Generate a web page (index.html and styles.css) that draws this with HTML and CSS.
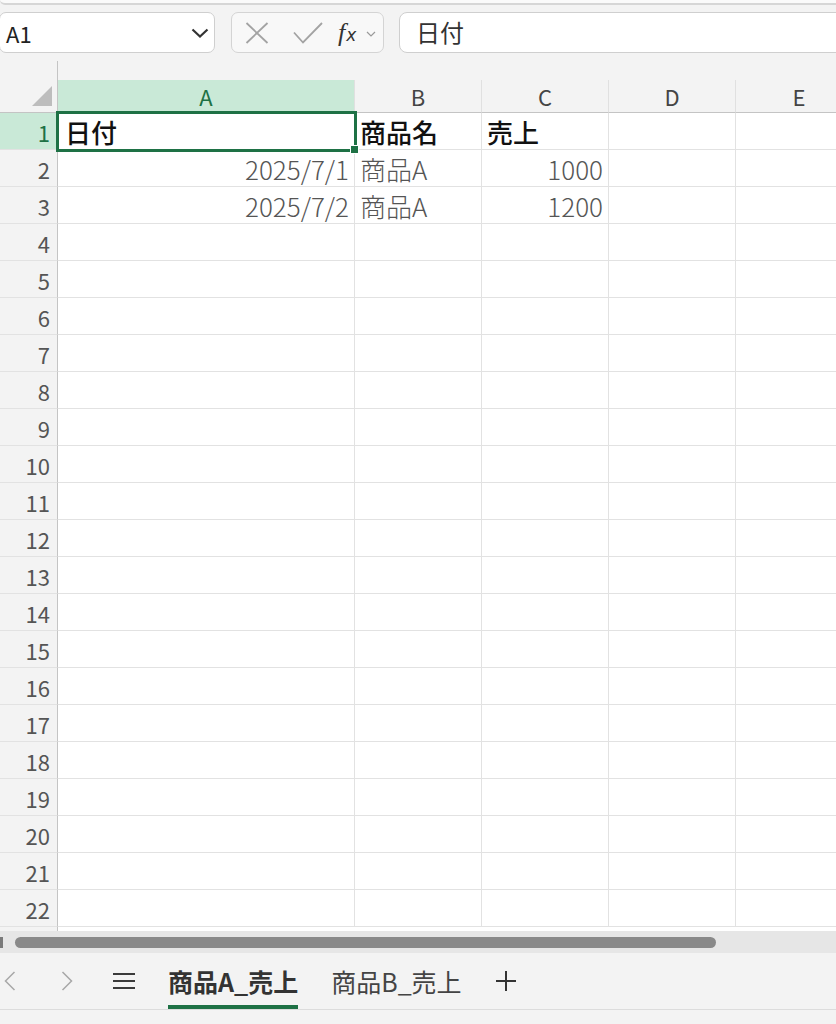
FILE: index.html
```html
<!DOCTYPE html>
<html lang="ja">
<head>
  <meta charset="UTF-8">
  <meta name="viewport" content="width=device-width, initial-scale=1.0">
  <title>Book1 - Excel</title>
  <link rel="stylesheet" href="styles.css">
</head>
<body>
  <div class="app">
    <div class="ribbon-edge"></div>

    <!-- Name box + formula bar -->
    <div class="formula-row">
      <div class="name-box">
        <span class="name-text">A1</span>
        <svg class="name-chevron" width="18" height="10" viewBox="0 0 18 10"><path d="M1.5 1.5 L9 8.5 L16.5 1.5" fill="none" stroke="#333" stroke-width="2.2"/></svg>
      </div>
      <div class="fx-buttons">
        <svg width="24" height="22" viewBox="0 0 24 22"><path d="M1.5 1 L22.5 21 M22.5 1 L1.5 21" stroke="#a3a3a3" stroke-width="1.8" fill="none"/></svg>
        <svg class="check" width="30" height="22" viewBox="0 0 30 22"><path d="M1 10.5 L10 20.5 L29 1" stroke="#a3a3a3" stroke-width="1.8" fill="none"/></svg>
        <span class="fx"><i>f</i><span class="fx-x">x</span></span>
        <svg class="fx-chevron" width="10" height="6" viewBox="0 0 10 6"><path d="M1 1 L5 5 L9 1" stroke="#9a9a9a" stroke-width="1.2" fill="none"/></svg>
      </div>
      <div class="formula-input">日付</div>
    </div>

    <!-- Sheet grid -->
    <div class="sheet">
      <div class="sheet-top"><div class="sheet-top-corner"></div></div>
      <table class="grid">
        <colgroup>
          <col class="w-rowhead"><col class="w-a"><col class="w-std"><col class="w-std"><col class="w-std"><col class="w-std">
        </colgroup>
        <thead>
          <tr>
            <th class="corner"><span class="corner-tri"></span></th>
            <th class="col-head active">A</th>
            <th class="col-head">B</th>
            <th class="col-head">C</th>
            <th class="col-head">D</th>
            <th class="col-head">E</th>
          </tr>
        </thead>
        <tbody>
          <tr class="head-row"><td class="row-head active">1</td><td class="selected">日付</td><td>商品名</td><td>売上</td><td></td><td></td></tr>
          <tr><td class="row-head">2</td><td class="num">2025/7/1</td><td>商品A</td><td class="num">1000</td><td></td><td></td></tr>
          <tr><td class="row-head">3</td><td class="num">2025/7/2</td><td>商品A</td><td class="num">1200</td><td></td><td></td></tr>
          <tr><td class="row-head">4</td><td></td><td></td><td></td><td></td><td></td></tr>
          <tr><td class="row-head">5</td><td></td><td></td><td></td><td></td><td></td></tr>
          <tr><td class="row-head">6</td><td></td><td></td><td></td><td></td><td></td></tr>
          <tr><td class="row-head">7</td><td></td><td></td><td></td><td></td><td></td></tr>
          <tr><td class="row-head">8</td><td></td><td></td><td></td><td></td><td></td></tr>
          <tr><td class="row-head">9</td><td></td><td></td><td></td><td></td><td></td></tr>
          <tr><td class="row-head">10</td><td></td><td></td><td></td><td></td><td></td></tr>
          <tr><td class="row-head">11</td><td></td><td></td><td></td><td></td><td></td></tr>
          <tr><td class="row-head">12</td><td></td><td></td><td></td><td></td><td></td></tr>
          <tr><td class="row-head">13</td><td></td><td></td><td></td><td></td><td></td></tr>
          <tr><td class="row-head">14</td><td></td><td></td><td></td><td></td><td></td></tr>
          <tr><td class="row-head">15</td><td></td><td></td><td></td><td></td><td></td></tr>
          <tr><td class="row-head">16</td><td></td><td></td><td></td><td></td><td></td></tr>
          <tr><td class="row-head">17</td><td></td><td></td><td></td><td></td><td></td></tr>
          <tr><td class="row-head">18</td><td></td><td></td><td></td><td></td><td></td></tr>
          <tr><td class="row-head">19</td><td></td><td></td><td></td><td></td><td></td></tr>
          <tr><td class="row-head">20</td><td></td><td></td><td></td><td></td><td></td></tr>
          <tr><td class="row-head">21</td><td></td><td></td><td></td><td></td><td></td></tr>
          <tr><td class="row-head">22</td><td></td><td></td><td></td><td></td><td></td></tr>
        </tbody>
      </table>
    </div>

    <!-- Horizontal scrollbar -->
    <div class="hscroll">
      <div class="hscroll-nub"></div>
      <div class="hscroll-thumb"></div>
    </div>

    <!-- Sheet tabs -->
    <div class="tabbar">
      <svg class="nav prev" width="12" height="20" viewBox="0 0 12 20"><path d="M10.5 1 L1.5 10 L10.5 19" stroke="#a8a8a8" stroke-width="1.5" fill="none"/></svg>
      <svg class="nav next" width="12" height="20" viewBox="0 0 12 20"><path d="M1.5 1 L10.5 10 L1.5 19" stroke="#a8a8a8" stroke-width="1.5" fill="none"/></svg>
      <svg class="menu" width="22" height="18" viewBox="0 0 22 18"><path d="M0 2 H22 M0 9 H22 M0 16 H22" stroke="#3a3a3a" stroke-width="2" fill="none"/></svg>
      <div class="tab active">商品A_売上</div>
      <div class="tab">商品B_売上</div>
      <svg class="add" width="20" height="20" viewBox="0 0 20 20"><path d="M10 0 V20 M0 10 H20" stroke="#333" stroke-width="2" fill="none"/></svg>
    </div>
  </div>
</body>
</html>
```

FILE: styles.css
```css
body {
  margin: 0;
  background-color: #ffffff;
  font-family: "Noto Sans CJK JP", "Noto Sans", sans-serif;
  color: #333;
}
.app {
  width: 836px;
  height: 1024px;
  overflow: hidden;
  background-color: #f3f3f3;
}
.ribbon-edge {
  height: 3px;
  background-color: #fafafa;
  border-bottom: 2px solid #d6d6d6;
  border-bottom-left-radius: 10px;
}

/* Formula row */
.formula-row {
  display: flex;
  align-items: stretch;
  height: 41px;
  padding: 7px 0 8px 0;
}
.name-box {
  display: flex;
  align-items: center;
  justify-content: space-between;
  width: 216px;
  margin-left: -1px;
  box-sizing: border-box;
  background-color: #ffffff;
  border: 1px solid #cfcfcf;
  border-radius: 7px;
  padding: 0 5px 0 6px;
}
.name-text {
  font-size: 22px;
  color: #222;
}
.fx-buttons {
  display: flex;
  align-items: center;
  width: 153px;
  margin-left: 16px;
  box-sizing: border-box;
  background-color: #f8f8f8;
  border: 1px solid #d4d4d4;
  border-radius: 7px;
  padding: 0 0 0 13px;
}
.fx-buttons .check {
  margin-left: 24px;
}
.fx {
  margin-left: 15px;
  font-family: "Liberation Serif", serif;
  color: #333;
  line-height: 1;
}
.fx i {
  font-size: 26px;
}
.fx-x {
  font-family: "DejaVu Sans", sans-serif;
  font-style: italic;
  font-size: 17px;
  margin-left: 1px;
}
.fx-chevron {
  margin-left: 10px;
  margin-top: 2px;
}
.formula-input {
  flex: 1;
  margin-left: 15px;
  margin-right: -20px;
  background-color: #ffffff;
  border: 1px solid #cfcfcf;
  border-radius: 8px;
  padding-left: 16px;
  font-size: 24px;
  line-height: 37px;
  color: #333;
}

/* Sheet */
.sheet {
  height: 870px;
  overflow: hidden;
  background: linear-gradient(to right, #f3f3f3 57px, #c4c4c4 57px, #c4c4c4 58px, #ffffff 58px);
}
.sheet-top {
  height: 19px;
  background-color: #f3f3f3;
}
.sheet-top-corner {
  width: 57px;
  height: 19px;
  border-right: 1px solid #c4c4c4;
}
.grid {
  width: 863px;
  table-layout: fixed;
  border-collapse: separate;
  border-spacing: 0;
}
.w-rowhead { width: 58px; }
.w-a { width: 297px; }
.w-std { width: 127px; }
.grid th,
.grid td {
  box-sizing: border-box;
  padding: 0 5px;
  white-space: nowrap;
  overflow: visible;
}
.grid th {
  height: 33px;
  background-color: #f3f3f3;
  border-right: 1px solid #e0e0e0;
  border-bottom: 1px solid #c4c4c4;
  font-weight: 400;
  font-size: 22px;
  color: #444;
  text-align: center;
  line-height: 30px;
}
.grid th.corner {
  position: relative;
  border-right: 1px solid #c4c4c4;
}
.corner-tri {
  position: absolute;
  right: 5px;
  bottom: 6px;
  width: 0;
  height: 0;
  border-left: 20px solid transparent;
  border-bottom: 20px solid #bdbdbd;
}
.grid th.active {
  background-color: #c9e9d7;
  color: #1e7145;
}
.grid td {
  height: 37px;
  border-right: 1px solid #e2e2e2;
  border-bottom: 1px solid #e2e2e2;
  font-size: 26px;
  font-weight: 300;
  line-height: 32px;
  color: #555;
  vertical-align: middle;
  padding-top: 2px;
}
.grid td.row-head {
  background-color: #f3f3f3;
  border-right: 1px solid #c4c4c4;
  font-size: 22px;
  font-weight: 400;
  text-align: right;
  padding-right: 7px;
  color: #555;
}
.grid td.row-head.active {
  background-color: #c9e9d7;
  color: #1e7145;
}
.head-row td {
  color: #111;
  font-weight: 500;
}
.grid td.num {
  text-align: right;
  padding-right: 5px;
}
.grid td.selected {
  position: relative;
  padding-left: 7px;
}
.grid td.selected::before {
  content: "";
  position: absolute;
  top: -2px;
  left: -2px;
  right: -3px;
  bottom: -3px;
  border: 3px solid #1e7145;
}
.grid td.selected::after {
  content: "";
  position: absolute;
  right: -5px;
  bottom: -5px;
  width: 7px;
  height: 7px;
  background-color: #1e7145;
  border: 1px solid #ffffff;
}

/* Scrollbar */
.hscroll {
  display: flex;
  align-items: center;
  height: 22px;
  background-color: #e6e6e6;
}
.hscroll-nub {
  width: 3px;
  height: 11px;
  background-color: #7a7a7a;
}
.hscroll-thumb {
  width: 701px;
  height: 11px;
  margin-left: 12px;
  border-radius: 6px;
  background-color: #898989;
}

/* Tab bar */
.tabbar {
  display: flex;
  align-items: center;
  height: 57px;
  box-sizing: border-box;
  border-bottom: 1px solid #dcdcdc;
  background-color: #f3f3f3;
}
.nav.prev { margin-left: 4px; }
.nav.next { margin-left: 45px; }
.menu { margin-left: 40px; }
.tab {
  align-self: stretch;
  display: flex;
  align-items: center;
  box-sizing: border-box;
  margin-left: 33px;
  padding-top: 3px;
  border-bottom: 4px solid transparent;
  font-size: 25px;
  color: #444;
}
.tab.active {
  font-weight: 700;
  color: #333;
  border-bottom-color: #1e7145;
}
.add { margin-left: 34px; }
```
